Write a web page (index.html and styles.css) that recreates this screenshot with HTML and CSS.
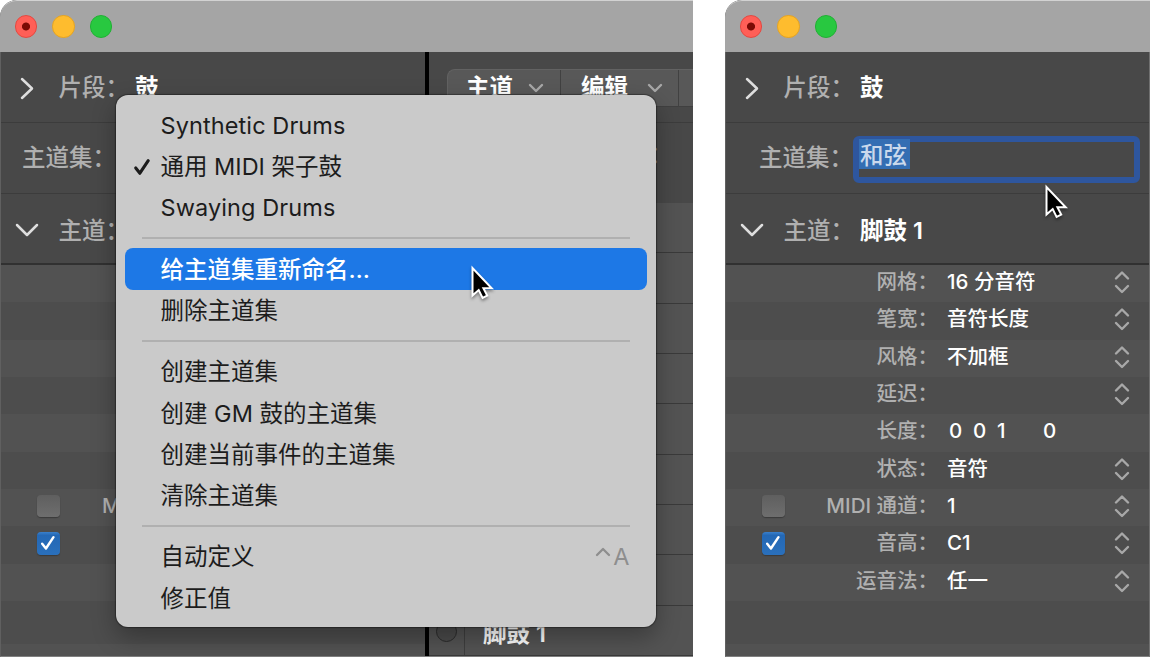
FILE: index.html
```
<!DOCTYPE html>
<html lang="zh-CN">
<head>
    <meta charset="UTF-8">
    <meta name="viewport" content="width=device-width, initial-scale=1.0">
    <title>主道集</title>
    <link rel="stylesheet" href="styles.css">
</head>
<body>
    <svg class="defs" width="0" height="0">
        <symbol id="right" viewBox="0 0 16 24"><path d="M3 3l10 9.5L3 22"/></symbol>
        <symbol id="down" viewBox="0 0 24 16"><path d="M2 3l10 10L22 3"/></symbol>
        <symbol id="step" viewBox="0 0 16 24"><path d="M2 8.5l6-6 6 6M2 16l6 6 6-6"/></symbol>
        <symbol id="small-down" viewBox="0 0 16 10"><path d="M2 2l6 6 6-6"/></symbol>
        <symbol id="tick" viewBox="0 0 24 24"><path d="M5.5 12.5l4 5 8-12"/></symbol>
        <symbol id="cursor" viewBox="0 0 26 36">
            <path d="M2.5 3V30.5l6.2-5.4 3.9 7.8 4.6-2.3-3.8-7.3h8.3z"/>
        </symbol>
    </svg>

    <div class="window window-left">
        <div class="titlebar">
            <span class="light close"></span>
            <span class="light minimize"></span>
            <span class="light zoom"></span>
        </div>
        <div class="content">
            <div class="inspector">
                <div class="header">
                    <svg class="arrow"><use href="#right"/></svg>
                    <span class="header-label">片段：</span>
                    <span class="header-value">鼓</span>
                </div>
                <div class="header header-set">
                    <span class="header-label">主道集：</span>
                </div>
                <div class="header header-last">
                    <svg class="arrow arrow-down"><use href="#down"/></svg>
                    <span class="header-label">主道：</span>
                </div>
                <div class="rows">
                    <div class="row"></div>
                    <div class="row"></div>
                    <div class="row"></div>
                    <div class="row"></div>
                    <div class="row"></div>
                    <div class="row"></div>
                    <div class="row"><span class="check"></span><span class="label label-cut">M</span></div>
                    <div class="row"><span class="check checked"><svg><use href="#tick"/></svg></span></div>
                    <div class="row"></div>
                    <div class="row filler"></div>
                    <div class="row"></div>
                </div>
            </div>
            <div class="editor">
                <div class="toolbar">
                    <div class="tabs">
                        <div class="tab">主道<svg><use href="#small-down"/></svg></div>
                        <div class="tab tab-edit">编辑<svg><use href="#small-down"/></svg></div>
                        <div class="tab tab-cut"></div>
                    </div>
                </div>
                <div class="editor-head"><span>：</span></div>
                <div class="lanes">
                    <div class="lane"></div>
                    <div class="lane"></div>
                    <div class="lane"></div>
                    <div class="lane"></div>
                    <div class="lane"></div>
                    <div class="lane"></div>
                    <div class="lane"></div>
                    <div class="lane"></div>
                    <div class="lane lane-named">
                        <div class="lane-dot"><span></span></div>
                        <div class="lane-name">脚鼓 1</div>
                    </div>
                </div>
            </div>
        </div>

        <div class="menu">
            <div class="item latin">Synthetic Drums</div>
            <div class="item"><svg class="tick"><use href="#tick"/></svg>通用 MIDI 架子鼓</div>
            <div class="item latin">Swaying Drums</div>
            <div class="separator"></div>
            <div class="item selected">给主道集重新命名…</div>
            <div class="item">删除主道集</div>
            <div class="separator"></div>
            <div class="item">创建主道集</div>
            <div class="item">创建 GM 鼓的主道集</div>
            <div class="item">创建当前事件的主道集</div>
            <div class="item">清除主道集</div>
            <div class="separator"></div>
            <div class="item">自动定义<span class="shortcut"><svg><use href="#small-down"/></svg>A</span></div>
            <div class="item">修正值</div>
        </div>
        <svg class="cursor cursor-left"><use href="#cursor"/></svg>
    </div>

    <div class="window window-right">
        <div class="titlebar">
            <span class="light close"></span>
            <span class="light minimize"></span>
            <span class="light zoom"></span>
        </div>
        <div class="content">
            <div class="inspector">
                <div class="header">
                    <svg class="arrow"><use href="#right"/></svg>
                    <span class="header-label">片段：</span>
                    <span class="header-value">鼓</span>
                </div>
                <div class="header header-set">
                    <span class="header-label">主道集：</span>
                    <div class="field"><span>和弦</span></div>
                </div>
                <div class="header header-last">
                    <svg class="arrow arrow-down"><use href="#down"/></svg>
                    <span class="header-label">主道：</span>
                    <span class="header-value">脚鼓 1</span>
                </div>
                <div class="rows">
                    <div class="row"><span class="label">网格：</span><span class="value">16 分音符</span><svg class="step"><use href="#step"/></svg></div>
                    <div class="row"><span class="label">笔宽：</span><span class="value">音符长度</span><svg class="step"><use href="#step"/></svg></div>
                    <div class="row"><span class="label">风格：</span><span class="value">不加框</span><svg class="step"><use href="#step"/></svg></div>
                    <div class="row"><span class="label">延迟：</span><span class="value"></span><svg class="step"><use href="#step"/></svg></div>
                    <div class="row"><span class="label">长度：</span><span class="value digits"><b>0</b><b>0</b><b>1</b><b class="ticks">0</b></span></div>
                    <div class="row"><span class="label">状态：</span><span class="value">音符</span><svg class="step"><use href="#step"/></svg></div>
                    <div class="row"><span class="check"></span><span class="label">MIDI 通道：</span><span class="value">1</span><svg class="step"><use href="#step"/></svg></div>
                    <div class="row"><span class="check checked"><svg><use href="#tick"/></svg></span><span class="label">音高：</span><span class="value">C1</span><svg class="step"><use href="#step"/></svg></div>
                    <div class="row"><span class="label">运音法：</span><span class="value">任一</span><svg class="step"><use href="#step"/></svg></div>
                    <div class="row filler"></div>
                    <div class="row"></div>
                </div>
            </div>
        </div>
        <svg class="cursor cursor-right"><use href="#cursor"/></svg>
    </div>
</body>
</html>
```
FILE: styles.css
```
* {
    box-sizing: border-box;
}

body {
    margin: 0;
    height: 660px;
    display: flex;
    align-items: flex-start;
    gap: 32px;
    background-color: #fff;
    font-family: Inter, "Noto Sans CJK SC", sans-serif;
    overflow: hidden;
}

svg {
    fill: none;
    stroke-linecap: round;
    stroke-linejoin: round;
}

.defs {
    position: absolute;
}

.window {
    position: relative;
    height: 657px;
    flex: none;
    overflow: hidden;
    border-top-left-radius: 17px;
    background-color: #484848;
}

.window-left {
    width: 693px;
}

.window-right {
    width: 425px;
}

.titlebar {
    height: 52px;
    display: flex;
    align-items: center;
    gap: 15px;
    padding-left: 15px;
    background-color: #a5a5a5;
    border-top: 1px solid #d2d2d2;
    border-top-left-radius: 17px;
}

.light {
    width: 22.3px;
    height: 22.3px;
    border-radius: 50%;
}

.close {
    background: radial-gradient(circle, #7b0b05 0 3.6px, #ff5f57 4.4px);
    border: 1px solid #e5473f;
}

.minimize {
    background-color: #febc2e;
    border: 1px solid #e3a325;
}

.zoom {
    background-color: #28c840;
    border: 1px solid #21b034;
}

.content {
    display: flex;
    height: 605px;
    border-left: 1px solid #606060;
    border-bottom: 1px solid #808080;
}

.window-right .content {
    border-right: 1px solid #707070;
}

.inspector {
    flex: 1;
}

.window-left .inspector {
    flex: none;
    width: 424px;
}

/* section headers */
.header {
    height: 71px;
    display: flex;
    align-items: center;
    padding: 2px 0 0 18px;
    font-size: 23.5px;
    line-height: 34px;
    color: #b0b0b0;
    border-bottom: 1px solid #3c3c3c;
    white-space: nowrap;
}

.header-last {
    padding-top: 4px;
    border-bottom: 2px solid #313131;
}

.arrow {
    width: 16px;
    height: 24px;
    stroke: #dedede;
    stroke-width: 2.5;
}

.arrow-down {
    width: 24px;
    height: 16px;
    margin: -2px 0 0 -4px;
}

.header-label {
    width: 94px;
    text-align: right;
    font-weight: 500;
}

.arrow-down + .header-label {
    width: 90px;
}

.header-set {
    padding-top: 0;
}

.header-set .header-label {
    width: 110px;
}

.window-right .header-set .header-label {
    width: 109px;
}

.window-left .header-set {
    padding-left: 5px;
}

.header-value {
    margin-left: 6px;
    font-weight: 600;
    font-size: 23.5px;
    color: #fff;
}

.field {
    width: 287px;
    height: 47px;
    margin: 3px 0 0 0;
    border: 6px solid #2e569e;
    border-radius: 6px;
    display: flex;
    align-items: flex-start;
}

.field span {
    height: 30px;
    margin-top: -3px;
    padding: 0 3px 0 1px;
    line-height: 33px;
    font-weight: 500;
    color: #cad9ec;
    background-color: #346eb3;
}

/* parameter rows */
.row {
    height: 37.33px;
    display: grid;
    grid-template-columns: 61px 151px 160px 1fr;
    align-items: center;
    padding-bottom: 3px;
    font-size: 20.5px;
    line-height: 30px;
    color: #b0b0b0;
    white-space: nowrap;
    background-color: #4d4d4d;
}

.row:nth-child(odd) {
    background-color: #525252;
}

.rows .filler {
    height: 43px;
}

.rows .row:last-child {
    height: 12px;
}

.label {
    grid-column: 2;
    text-align: right;
    font-weight: 500;
}

.label-cut {
    padding-left: 40px;
    text-align: left;
}

.value {
    grid-column: 3;
    padding-left: 9px;
    font-weight: 500;
    color: #fff;
}

.digits {
    display: flex;
    padding-left: 11px;
}

.digits b {
    width: 24px;
    font-weight: 500;
}

.digits .ticks {
    margin-left: 22px;
}

.step {
    grid-column: 4;
    width: 16px;
    height: 24px;
    margin-left: 16px;
    stroke: #a8a8a8;
    stroke-width: 2.4;
}

.check {
    grid-column: 1;
    width: 22.6px;
    height: 22.6px;
    margin-left: 36px;
    border-radius: 4px;
    background: linear-gradient(#5f5f5f, #6e6e6e);
    box-shadow: 0 1px 1px #3a3a3a;
}

.checked {
    background: linear-gradient(#3a80cc, #2468b5 15%, #2a70bc);
}

.check svg {
    display: block;
    width: 22.6px;
    height: 22.6px;
    stroke: #fff;
    stroke-width: 2.6;
}

/* editor side */
.editor {
    flex: 1;
    border-left: 4px solid #000;
}

.toolbar {
    height: 71px;
    padding: 17px 0 0 18px;
    border-bottom: 1px solid #3c3c3c;
}

.tabs {
    height: 38px;
    display: flex;
    background-color: #585858;
    border: 1px solid #626262;
    border-right: 0;
    border-bottom-color: #404040;
    border-top-left-radius: 8px;
}

.tab {
    width: 113px;
    display: flex;
    align-items: center;
    gap: 15px;
    padding-left: 18px;
    font-size: 23.5px;
    line-height: 34px;
    font-weight: 600;
    color: #fff;
    border-right: 1px solid #414141;
    white-space: nowrap;
}

.tab-edit {
    width: 118px;
    gap: 19px;
    padding-left: 20px;
}

.tab-cut {
    flex: 1;
    border-right: 0;
}

.tab svg {
    width: 16px;
    height: 10px;
    margin-top: -1px;
    stroke: #a8a8a8;
    stroke-width: 2.4;
}

.editor-head {
    height: 80px;
    padding: 15px 0 0 220px;
    font-size: 23.5px;
    line-height: 34px;
    color: #b4b4b4;
}

.lane {
    height: 50.33px;
    background-color: #535353;
    border-bottom: 1px solid #3a3a3a;
}

.lane-named {
    display: flex;
}

.lane-dot {
    width: 36px;
    display: flex;
    justify-content: center;
    align-items: center;
    border-right: 1px solid #3e3e3e;
}

.lane-dot span {
    width: 21px;
    height: 21px;
    margin-top: 3px;
    border: 1px solid #2b2b2b;
    border-radius: 50%;
    background-color: #4a4a4a;
}

.lane-name {
    padding: 11px 0 0 18px;
    font-size: 23.5px;
    line-height: 34px;
    font-weight: 600;
    color: #fff;
}

/* popup menu */
.menu {
    position: absolute;
    left: 115.5px;
    top: 95px;
    width: 540.5px;
    height: 532px;
    padding: 9.5px 9.5px 0;
    border-radius: 12px;
    background-color: #cacaca;
    box-shadow: 0 0 1px 1px rgba(0, 0, 0, 0.35), 0 10px 24px rgba(0, 0, 0, 0.3);
}

.item {
    position: relative;
    height: 41.2px;
    padding: 1px 17px 0 35.5px;
    display: flex;
    align-items: center;
    font-size: 23.5px;
    line-height: 34px;
    color: #1c1c1c;
    border-radius: 8px;
    white-space: nowrap;
}

.latin {
    letter-spacing: 0.1px;
}

.selected {
    background-color: #1d78e6;
    color: #fff;
    font-weight: 500;
}

.separator {
    height: 20.4px;
    padding: 9px 17px;
}

.separator::before {
    content: "";
    display: block;
    height: 2px;
    background-color: #b0b0b0;
}

.tick {
    position: absolute;
    left: 5px;
    top: 9px;
    width: 25px;
    height: 25px;
    stroke: #1c1c1c;
    stroke-width: 3;
}

.shortcut {
    margin-left: auto;
    display: flex;
    gap: 2px;
    color: #8e8e8e;
}

.shortcut svg {
    width: 16px;
    height: 10px;
    margin-top: 7px;
    transform: rotate(180deg);
    stroke: #8e8e8e;
    stroke-width: 2.3;
}

.cursor {
    position: absolute;
    width: 26px;
    height: 36px;
    fill: #000;
    stroke: #fff;
    stroke-width: 2;
    stroke-linejoin: miter;
    filter: drop-shadow(0 2px 1.5px rgba(0, 0, 0, 0.4));
}

.cursor-left {
    left: 470px;
    top: 265px;
}

.cursor-right {
    left: 319px;
    top: 184px;
}
```
